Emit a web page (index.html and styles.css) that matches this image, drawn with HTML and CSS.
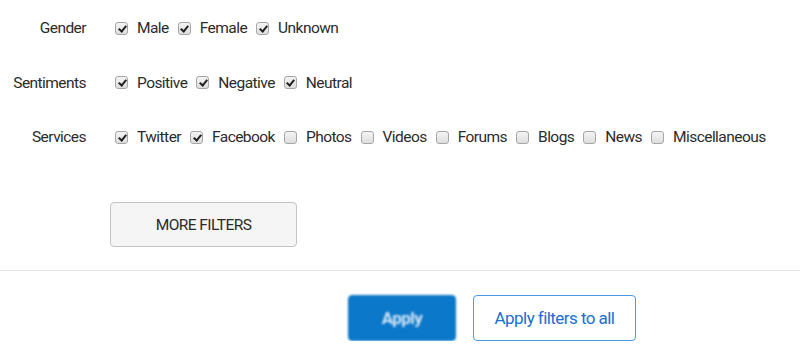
FILE: index.html
```html
<!DOCTYPE html>
<html lang="en">
  <head>
    <meta charset="UTF-8" />
    <meta name="viewport" content="width=device-width, initial-scale=1.0" />
    <title>Filters</title>
    <link rel="stylesheet" href="styles.css">
  </head>
  <body>
    <div class="filters">
      <div class="filter-row">
        <span class="filter-label">Gender</span>
        <div class="options">
          <label class="option"><input type="checkbox" checked /> Male</label>
          <label class="option"><input type="checkbox" checked /> Female</label>
          <label class="option"><input type="checkbox" checked /> Unknown</label>
        </div>
      </div>

      <div class="filter-row">
        <span class="filter-label">Sentiments</span>
        <div class="options">
          <label class="option"><input type="checkbox" checked /> Positive</label>
          <label class="option"><input type="checkbox" checked /> Negative</label>
          <label class="option"><input type="checkbox" checked /> Neutral</label>
        </div>
      </div>

      <div class="filter-row">
        <span class="filter-label">Services</span>
        <div class="options">
          <label class="option"><input type="checkbox" checked /> Twitter</label>
          <label class="option"><input type="checkbox" checked /> Facebook</label>
          <label class="option"><input type="checkbox" /> Photos</label>
          <label class="option"><input type="checkbox" /> Videos</label>
          <label class="option"><input type="checkbox" /> Forums</label>
          <label class="option"><input type="checkbox" /> Blogs</label>
          <label class="option"><input type="checkbox" /> News</label>
          <label class="option"><input type="checkbox" /> Miscellaneous</label>
        </div>
      </div>

      <div class="more">
        <button class="btn-more">MORE FILTERS</button>
      </div>
    </div>

    <div class="actions">
      <button class="btn-apply">Apply</button>
      <button class="btn-apply-all">Apply filters to all</button>
    </div>
  </body>
</html>
```

FILE: styles.css
```css
body {
  margin: 0;
  font-family: Roboto, "Liberation Sans", Arial, sans-serif;
  font-size: 15.5px;
  letter-spacing: -0.55px;
  color: #2b2b2b;
  background-color: white;
}
.filters {
  padding-top: 18px;
  border-bottom: 1px solid #e6e6e6;
  padding-bottom: 23px;
}
.filter-row {
  display: flex;
  align-items: center;
  height: 20px;
  margin-bottom: 34.5px;
}
.filter-label {
  width: 86px;
  margin-right: 29px;
  text-align: right;
}
.options {
  display: flex;
  align-items: center;
  gap: 9px;
}
.option {
  display: flex;
  align-items: center;
  gap: 9px;
  white-space: nowrap;
}
input[type="checkbox"] {
  appearance: none;
  margin: 0;
  width: 13px;
  height: 13px;
  border: 1px solid #a6a6a6;
  border-radius: 3px;
  background: linear-gradient(#f4f4f4, #dedede);
  position: relative;
}
input[type="checkbox"]:checked::after {
  content: "";
  position: absolute;
  left: 3.5px;
  top: 1px;
  width: 3px;
  height: 6px;
  border: solid #222;
  border-width: 0 2px 2px 0;
  transform: rotate(40deg);
}
.more {
  padding-left: 110px;
  margin-top: 55px;
}
.btn-more {
  width: 187px;
  height: 45px;
  font-family: inherit;
  font-size: 15.5px;
  letter-spacing: -0.55px;
  color: #2b2b2b;
  background-color: #f5f5f5;
  border: 1px solid #c4c4c4;
  border-radius: 4px;
}
.actions {
  display: flex;
  gap: 17px;
  padding-left: 348px;
  padding-top: 24px;
}
.actions button {
  height: 46px;
  font-family: inherit;
  font-size: 17px;
  letter-spacing: -0.55px;
  border-radius: 4px;
}
.btn-apply {
  width: 108px;
  background-color: #0b78c9;
  color: #d3e6f7;
  font-weight: bold;
  border: 1px solid #0b78c9;
  filter: blur(1.2px);
}
.btn-apply-all {
  width: 163px;
  background-color: white;
  color: #1a6fd0;
  border: 1px solid #4a9be3;
}
```
